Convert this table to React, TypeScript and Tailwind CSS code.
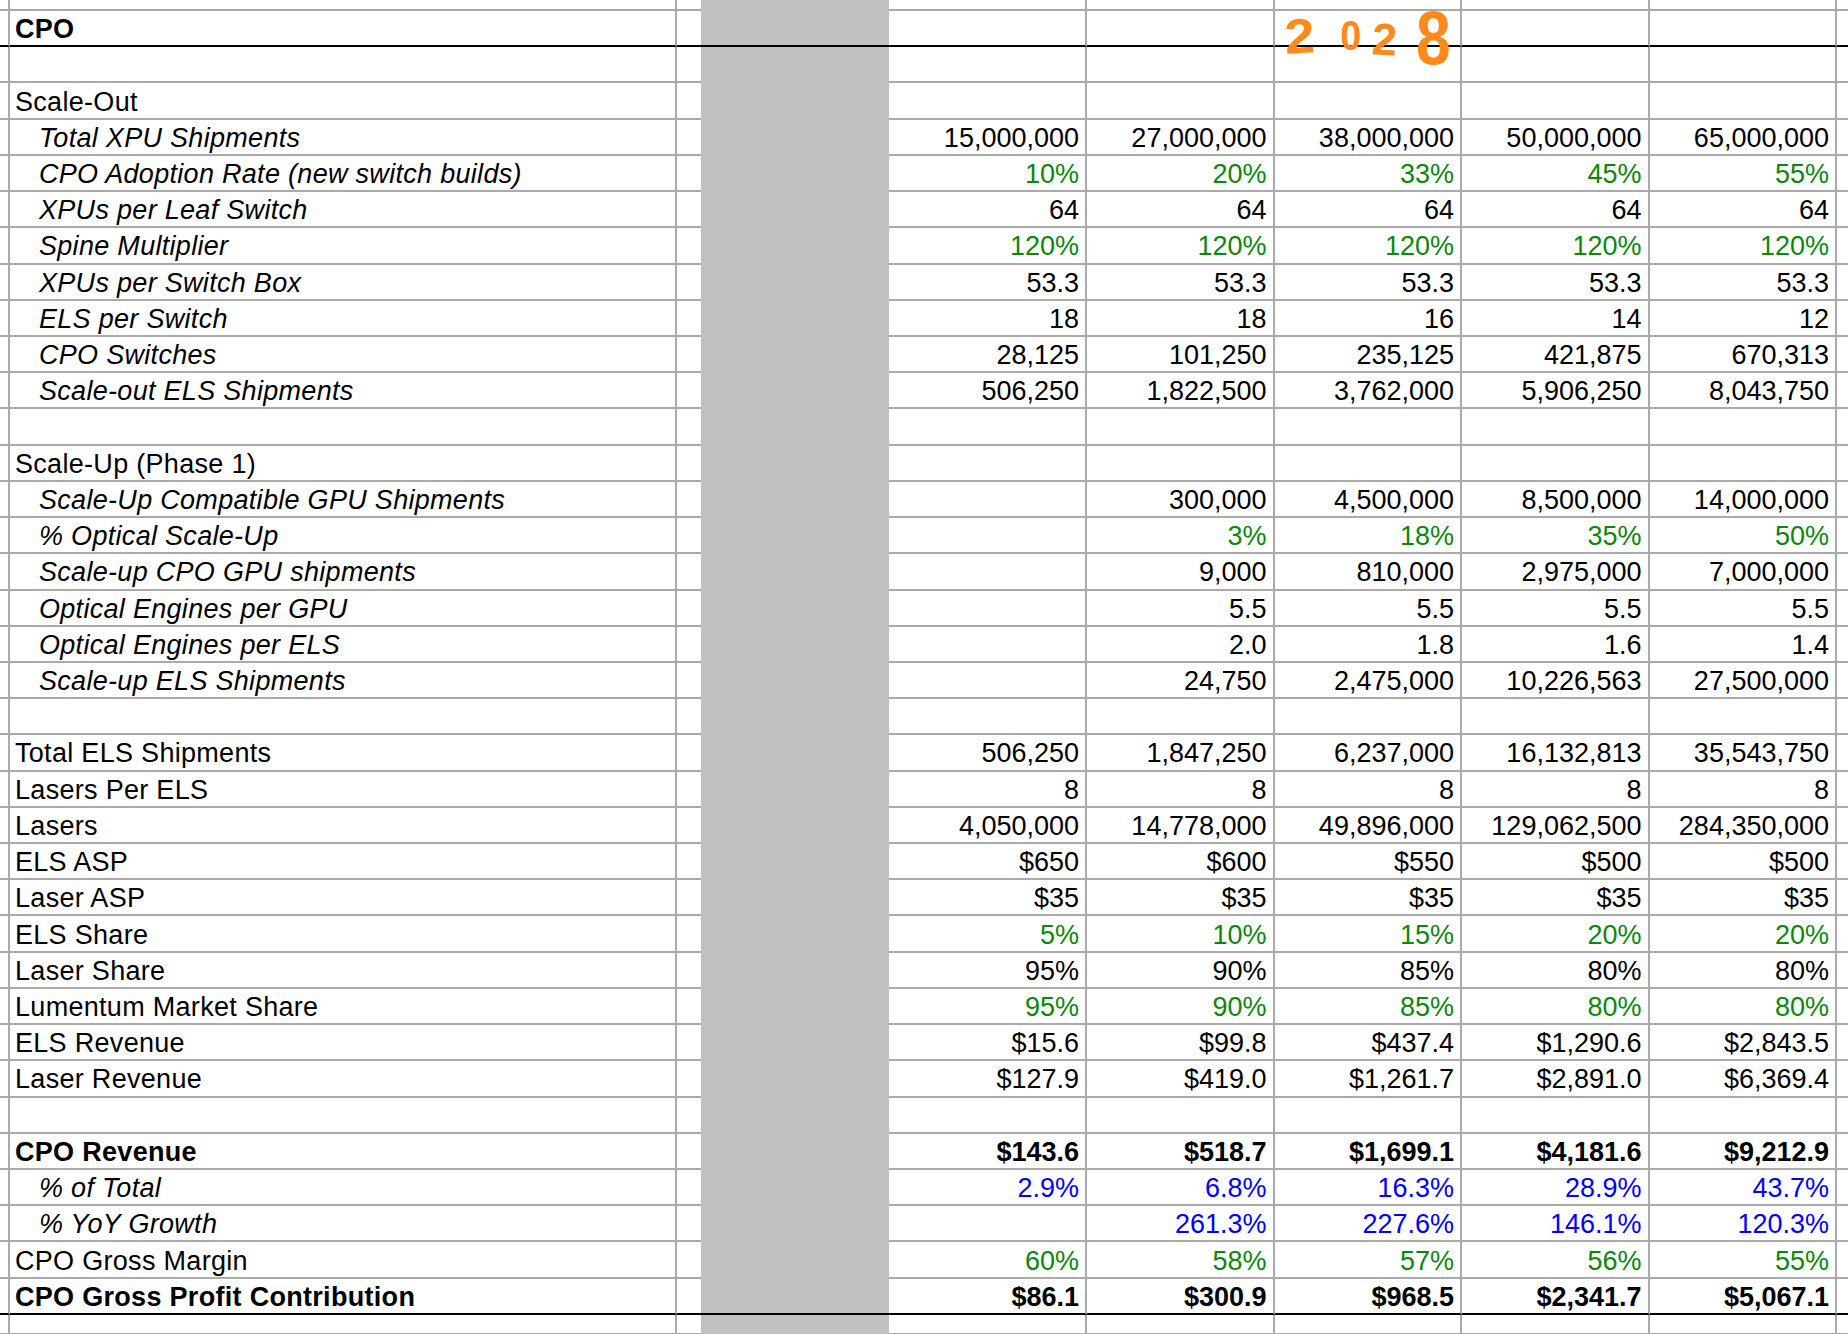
import React from "react";

type Row = {
  label?: string;
  values?: string[];
  kind?: "head" | "plain" | "sub" | "bold";
  color?: "green" | "blue";
  line?: "black";
};

const rows: Row[] = [
  { label: "CPO", kind: "head", line: "black" },
  {},
  { label: "Scale-Out" },
  { label: "Total XPU Shipments", kind: "sub", values: ["15,000,000", "27,000,000", "38,000,000", "50,000,000", "65,000,000"] },
  { label: "CPO Adoption Rate (new switch builds)", kind: "sub", color: "green", values: ["10%", "20%", "33%", "45%", "55%"] },
  { label: "XPUs per Leaf Switch", kind: "sub", values: ["64", "64", "64", "64", "64"] },
  { label: "Spine Multiplier", kind: "sub", color: "green", values: ["120%", "120%", "120%", "120%", "120%"] },
  { label: "XPUs per Switch Box", kind: "sub", values: ["53.3", "53.3", "53.3", "53.3", "53.3"] },
  { label: "ELS per Switch", kind: "sub", values: ["18", "18", "16", "14", "12"] },
  { label: "CPO Switches", kind: "sub", values: ["28,125", "101,250", "235,125", "421,875", "670,313"] },
  { label: "Scale-out ELS Shipments", kind: "sub", values: ["506,250", "1,822,500", "3,762,000", "5,906,250", "8,043,750"] },
  {},
  { label: "Scale-Up (Phase 1)" },
  { label: "Scale-Up Compatible GPU Shipments", kind: "sub", values: ["", "300,000", "4,500,000", "8,500,000", "14,000,000"] },
  { label: "% Optical Scale-Up", kind: "sub", color: "green", values: ["", "3%", "18%", "35%", "50%"] },
  { label: "Scale-up CPO GPU shipments", kind: "sub", values: ["", "9,000", "810,000", "2,975,000", "7,000,000"] },
  { label: "Optical Engines per GPU", kind: "sub", values: ["", "5.5", "5.5", "5.5", "5.5"] },
  { label: "Optical Engines per ELS", kind: "sub", values: ["", "2.0", "1.8", "1.6", "1.4"] },
  { label: "Scale-up ELS Shipments", kind: "sub", values: ["", "24,750", "2,475,000", "10,226,563", "27,500,000"] },
  {},
  { label: "Total ELS Shipments", values: ["506,250", "1,847,250", "6,237,000", "16,132,813", "35,543,750"] },
  { label: "Lasers Per ELS", values: ["8", "8", "8", "8", "8"] },
  { label: "Lasers", values: ["4,050,000", "14,778,000", "49,896,000", "129,062,500", "284,350,000"] },
  { label: "ELS ASP", values: ["$650", "$600", "$550", "$500", "$500"] },
  { label: "Laser ASP", values: ["$35", "$35", "$35", "$35", "$35"] },
  { label: "ELS Share", color: "green", values: ["5%", "10%", "15%", "20%", "20%"] },
  { label: "Laser Share", values: ["95%", "90%", "85%", "80%", "80%"] },
  { label: "Lumentum Market Share", color: "green", values: ["95%", "90%", "85%", "80%", "80%"] },
  { label: "ELS Revenue", values: ["$15.6", "$99.8", "$437.4", "$1,290.6", "$2,843.5"] },
  { label: "Laser Revenue", values: ["$127.9", "$419.0", "$1,261.7", "$2,891.0", "$6,369.4"] },
  {},
  { label: "CPO Revenue", kind: "bold", values: ["$143.6", "$518.7", "$1,699.1", "$4,181.6", "$9,212.9"] },
  { label: "% of Total", kind: "sub", color: "blue", values: ["2.9%", "6.8%", "16.3%", "28.9%", "43.7%"] },
  { label: "% YoY Growth", kind: "sub", color: "blue", values: ["", "261.3%", "227.6%", "146.1%", "120.3%"] },
  { label: "CPO Gross Margin", color: "green", values: ["60%", "58%", "57%", "56%", "55%"] },
  { label: "CPO Gross Profit Contribution", kind: "bold", line: "black", values: ["$86.1", "$300.9", "$968.5", "$2,341.7", "$5,067.1"] },
];

const grid =
  "grid grid-cols-[10px_667px_24px_188px_198px_187.5px_187.5px_187.5px_187.5px_1fr]";

const SheetRow = ({ row, height }: { row: Row; height: string }) => {
  const line = row.line === "black" ? "border-black" : "border-[#aaaaaa]";
  const bold = row.kind === "head" || row.kind === "bold" ? "font-bold" : "";
  const italic = row.kind === "sub" ? "italic" : "";
  const color =
    row.color === "green"
      ? "text-[#0c870c]"
      : row.color === "blue"
        ? "text-[#0000ff]"
        : "text-black";

  return (
    <div className={`${grid} ${height}`}>
      <div className={`border-b-2 border-r-2 ${line} border-r-[#aaaaaa]`} />
      <div
        className={`flex items-center whitespace-nowrap border-b-2 border-r-2 ${line} border-r-[#aaaaaa] pt-[3px] tracking-[0.3px] ${bold} ${italic} ${
          row.kind === "sub" ? "pl-[29px]" : "pl-[5px]"
        }`}
      >
        {row.label}
      </div>
      <div className={`border-b-2 ${line}`} />
      <div className={`bg-[#c0c0c0] ${row.line === "black" ? "border-b-2 border-black" : ""}`} />
      {[0, 1, 2, 3, 4].map((i) => (
        <div
          key={i}
          className={`flex items-center justify-end whitespace-nowrap border-b-2 border-r-2 ${line} border-r-[#aaaaaa] pr-[6px] pt-[3px] ${bold} ${color}`}
        >
          {row.values?.[i] ?? ""}
        </div>
      ))}
      <div className={`border-b-2 ${line}`} />
    </div>
  );
};

const App = () => {
  return (
    <div className="relative h-[1334px] w-[1848px] overflow-hidden bg-white font-['Liberation_Sans',Arial,sans-serif] text-[27px] leading-none text-black">
      <SheetRow row={{}} height="h-[11px]" />
      {rows.map((row, i) => (
        <SheetRow key={i} row={row} height="h-[36.23px]" />
      ))}
      <SheetRow row={{}} height="h-[20px]" />

      {/* handwritten note over the 2028 column */}
      <div className="pointer-events-none font-['Liberation_Sans',sans-serif] font-bold leading-none text-[#ff8a1c]">
        <span className="absolute left-[1286px] top-[12px] -rotate-3 scale-x-110 text-[49px]">2</span>
        <span className="absolute left-[1339px] top-[15px] scale-x-90 text-[42px]">0</span>
        <span className="absolute left-[1372px] top-[17px] rotate-3 text-[45px]">2</span>
        <span className="absolute left-[1416px] top-0 origin-left scale-x-[0.82] text-[76px]">8</span>
      </div>
    </div>
  );
};

export default App;
